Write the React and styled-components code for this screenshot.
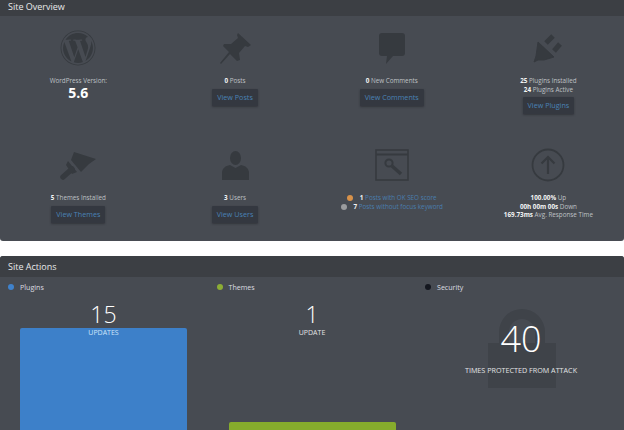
import React from "react";
import styled, { createGlobalStyle } from "styled-components";
import { FaWordpress } from "react-icons/fa";

const Global = createGlobalStyle`
  html, body {
    margin: 0;
    height: 430px;
    overflow: hidden;
    background: #fff;
    font-family: "Open Sans", "Noto Sans", sans-serif;
  }
`;

const Page = styled.div`
  display: flex;
  flex-direction: column;
  gap: 15px;
  height: 430px;
  overflow: hidden;
`;

const Panel = styled.section`
  background: #474b52;
  color: #bfc1c5;
  border-radius: ${props => (props.$top ? "0 0 3px 3px" : "3px 3px 0 0")};
  flex: ${props => (props.$top ? "0 0 241px" : "1 1 auto")};
  overflow: hidden;
`;

const PanelHeader = styled.h2`
  margin: 0;
  background: #3c3f44;
  color: #e8e9ea;
  font-size: 9px;
  font-weight: 400;
  line-height: 13px;
  height: ${props => props.$height}px;
  padding: ${props => props.$padTop}px 8px 0;
  box-sizing: border-box;
`;

const Grid = styled.div`
  display: grid;
  grid-template-columns: repeat(4, 156.7px);
  grid-template-rows: 119px 90px;
  padding-top: 14px;
`;

const Cell = styled.div`
  display: flex;
  flex-direction: column;
  align-items: center;
  text-align: center;
  font-size: 6.3px;
  line-height: 8.5px;
`;

const IconSlot = styled.div`
  height: ${props => props.$height || 36}px;
  margin-bottom: ${props => props.$gap || 11}px;
  display: flex;
  align-items: center;
  justify-content: center;
  color: #363a3f;
`;

const Line = styled.div`
  white-space: nowrap;
`;

const Strong = styled.b`
  color: #f4f5f5;
  font-weight: 700;
`;

const Version = styled.div`
  color: #fff;
  font-size: 14px;
  font-weight: 700;
  line-height: 13px;
`;

const ViewButton = styled.a`
  margin-top: 3px;
  height: 17px;
  padding: 0 5px;
  background: #343840;
  border-radius: 1px;
  box-shadow: 0 1px 2px rgba(30, 32, 36, 0.5);
  color: #4a82b5;
  font-size: 7.2px;
  line-height: 17px;
  white-space: nowrap;
`;

const SeoLine = styled.div`
  display: flex;
  align-items: center;
  justify-content: center;
  gap: 7px;
  white-space: nowrap;
`;

const Dot = styled.i`
  width: 6px;
  height: 6px;
  border-radius: 50%;
  background: ${props => props.$color};
  flex: none;
`;

const SeoLink = styled.span`
  color: #4a7eae;
`;

const Legend = styled.div`
  display: grid;
  grid-template-columns: repeat(3, 208.5px);
  height: 20px;
  align-items: center;
  padding-left: 8px;
`;

const LegendItem = styled.div`
  display: flex;
  align-items: center;
  gap: 6px;
  font-size: 7.1px;
  color: #dcdde0;
`;

const Charts = styled.div`
  display: grid;
  grid-template-columns: 208.5px 208.5px 1fr;
`;

const ChartColumn = styled.div`
  display: flex;
  flex-direction: column;
  align-items: stretch;
  padding-left: 20px;
  width: 167px;
  text-align: center;
`;

const Count = styled.div`
  color: #fff;
  font-size: 23px;
  line-height: 28px;
  font-weight: 300;
  margin-top: 3px;
`;

const CountLabel = styled.div`
  position: relative;
  z-index: 1;
  height: 9px;
  font-size: 7px;
  line-height: 9px;
  color: ${props => props.$color};
`;

const Bar = styled.div`
  height: 120px;
  margin-top: ${props => props.$offset}px;
  background: ${props => props.$color};
  border-radius: 2px 2px 0 0;
`;

const ShieldColumn = styled.div`
  position: relative;
  display: flex;
  flex-direction: column;
  align-items: center;
  width: 200px;
  margin-left: 4px;
  padding-top: 21px;
  text-align: center;
`;

const LockBack = styled.svg`
  position: absolute;
  left: 66px;
  top: 11px;
`;

const ShieldCount = styled.div`
  position: relative;
  color: #fff;
  font-size: 36px;
  font-weight: 300;
  line-height: 42px;
`;

const ShieldLabel = styled.div`
  position: relative;
  margin-top: 5px;
  color: #e2e3e5;
  font-size: 7.2px;
  line-height: 10px;
  white-space: nowrap;
`;

const PinIcon = () => (
  <svg width="31" height="31" viewBox="0 0 31 31" fill="currentColor">
    <path d="M18 0 31 12 28 14 25 13 19 20 20 27 17 28 10 21 1 31 0 30 9 19 3 13 4 11 11 11 18 5 17 2z" />
  </svg>
);

const CommentIcon = () => (
  <svg width="26" height="31" viewBox="0 0 26 31" fill="currentColor">
    <path d="M3 0h20a3 3 0 0 1 3 3v17a3 3 0 0 1-3 3H14l-7 8 1-8H3a3 3 0 0 1-3-3V3a3 3 0 0 1 3-3z" />
  </svg>
);

const PlugIcon = () => (
  <svg width="30" height="30" viewBox="0 0 30 30" fill="currentColor" stroke="currentColor">
    <path d="M5 9 21 24 11 27 5 27 1 29 3 23z" strokeWidth="1" strokeLinejoin="round" />
    <path d="M13 10 20 3M21 18 27 11" strokeWidth="5" />
  </svg>
);

const BrushIcon = () => (
  <svg width="36" height="29" viewBox="0 0 36 29" fill="currentColor" stroke="currentColor">
    <path d="M14 1 36 8 29 13 21 21 11 9z" strokeWidth="0" />
    <path d="M8 10 17 21 12 23 6 14z" strokeWidth="0" />
    <path d="M12 18 3 26" strokeWidth="5.5" strokeLinecap="round" />
  </svg>
);

const UserIcon = () => (
  <svg width="27" height="29" viewBox="0 0 27 29" fill="currentColor">
    <ellipse cx="13.5" cy="7" rx="5.5" ry="7" />
    <path d="M8 14l5.5 3L19 14c5 1 7 3 8 7v8H0v-8c1-4 3-6 8-7z" />
  </svg>
);

const SeoIcon = () => (
  <svg width="34" height="32" viewBox="0 0 34 32" fill="none" stroke="currentColor">
    <rect x="1" y="1" width="32" height="30" strokeWidth="1.6" />
    <path d="M1 5.5h32" strokeWidth="2" />
    <circle cx="14" cy="14" r="3.6" strokeWidth="2" />
    <path d="M17 17l9 8" strokeWidth="3.4" />
  </svg>
);

const UptimeIcon = () => (
  <svg width="34" height="34" viewBox="0 0 34 34" fill="none" stroke="currentColor">
    <circle cx="17" cy="17" r="15.5" strokeWidth="1.8" />
    <path d="M17 26V9M10.5 15.5 17 9l6.5 6.5" strokeWidth="2.2" />
  </svg>
);

const Lock = () => (
  <LockBack width="70" height="81" viewBox="0 0 70 81" fill="#3f4349">
    <path d="M12 36V24a23 23 0 0 1 46 0v12H48V24a13 13 0 0 0-26 0v12z" />
    <rect x="1" y="35" width="68" height="45" />
  </LockBack>
);

const App = () => (
  <Page>
    <Global />
    <Panel $top>
      <PanelHeader $height={16} $padTop={0}>Site Overview</PanelHeader>
      <Grid>
        <Cell>
          <IconSlot><FaWordpress size={36} /></IconSlot>
          <Line>WordPress Version:</Line>
          <Version>5.6</Version>
        </Cell>
        <Cell>
          <IconSlot><PinIcon /></IconSlot>
          <Line><Strong>0</Strong> Posts</Line>
          <ViewButton>View Posts</ViewButton>
        </Cell>
        <Cell>
          <IconSlot><CommentIcon /></IconSlot>
          <Line><Strong>0</Strong> New Comments</Line>
          <ViewButton>View Comments</ViewButton>
        </Cell>
        <Cell>
          <IconSlot><PlugIcon /></IconSlot>
          <Line><Strong>25</Strong> Plugins Installed</Line>
          <Line><Strong>24</Strong> Plugins Active</Line>
          <ViewButton>View Plugins</ViewButton>
        </Cell>
        <Cell>
          <IconSlot $height={32} $gap={13}><BrushIcon /></IconSlot>
          <Line><Strong>5</Strong> Themes Installed</Line>
          <ViewButton>View Themes</ViewButton>
        </Cell>
        <Cell>
          <IconSlot $height={32} $gap={13}><UserIcon /></IconSlot>
          <Line><Strong>3</Strong> Users</Line>
          <ViewButton>View Users</ViewButton>
        </Cell>
        <Cell>
          <IconSlot $height={32} $gap={13}><SeoIcon /></IconSlot>
          <SeoLine>
            <Dot $color="#d8924a" />
            <span><Strong>1</Strong> <SeoLink>Posts with OK SEO score</SeoLink></span>
          </SeoLine>
          <SeoLine>
            <Dot $color="#9b9c9e" />
            <span><Strong>7</Strong> <SeoLink>Posts without focus keyword</SeoLink></span>
          </SeoLine>
        </Cell>
        <Cell>
          <IconSlot $height={32} $gap={13}><UptimeIcon /></IconSlot>
          <Line><Strong>100.00%</Strong> Up</Line>
          <Line><Strong>00h 00m 00s</Strong> Down</Line>
          <Line><Strong>169.73ms</Strong> Avg. Response Time</Line>
        </Cell>
      </Grid>
    </Panel>
    <Panel>
      <PanelHeader $height={21} $padTop={4}>Site Actions</PanelHeader>
      <Legend>
        <LegendItem><Dot $color="#3f82cc" />Plugins</LegendItem>
        <LegendItem><Dot $color="#8cad35" />Themes</LegendItem>
        <LegendItem><Dot $color="#14171f" />Security</LegendItem>
      </Legend>
      <Charts>
        <ChartColumn>
          <Count>15</Count>
          <CountLabel $color="#cfe6fb">UPDATES</CountLabel>
          <Bar $color="#3d80c9" $offset={-9} />
        </ChartColumn>
        <ChartColumn>
          <Count>1</Count>
          <CountLabel $color="#e2e3e5">UPDATE</CountLabel>
          <Bar $color="#86ac2c" $offset={85} />
        </ChartColumn>
        <ShieldColumn>
          <Lock />
          <ShieldCount>40</ShieldCount>
          <ShieldLabel>TIMES PROTECTED FROM ATTACK</ShieldLabel>
        </ShieldColumn>
      </Charts>
    </Panel>
  </Page>
);

export default App;
